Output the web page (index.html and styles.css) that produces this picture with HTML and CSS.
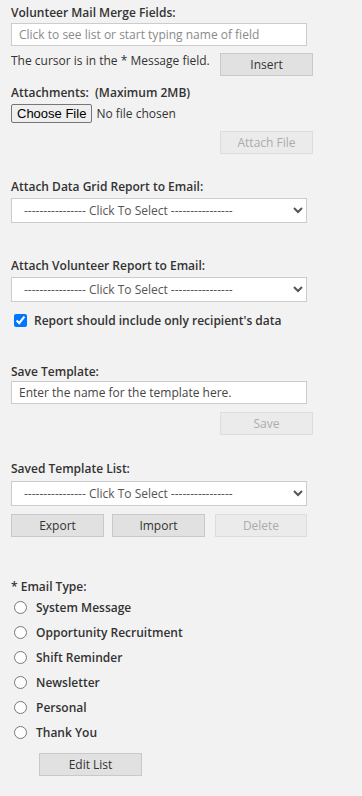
FILE: index.html
```html
<!DOCTYPE html>
<html lang="en">
<head>
    <meta charset="UTF-8">
    <meta name="viewport" content="width=device-width, initial-scale=1.0">
    <title>Compose Email</title>
    <link rel="stylesheet" href="styles.css">
</head>
<body>
    <div class="container">
        <div class="label">Volunteer Mail Merge Fields:</div>
        <input class="text-input merge" type="text" placeholder="Click to see list or start typing name of field">
        <div class="row cursor-row">
            <span class="cursor-note">The cursor is in the * Message field.</span>
            <button class="btn btn-right">Insert</button>
        </div>

        <div class="label attach-label">Attachments: &nbsp;(Maximum 2MB)</div>
        <input class="file-input" type="file">
        <div class="row row-end">
            <button class="btn btn-right" disabled>Attach File</button>
        </div>

        <div class="label grid-label">Attach Data Grid Report to Email:</div>
        <select class="select">
            <option>---------------- Click To Select ----------------</option>
        </select>

        <div class="label volunteer-label">Attach Volunteer Report to Email:</div>
        <select class="select">
            <option>---------------- Click To Select ----------------</option>
        </select>
        <label class="check-row">
            <input type="checkbox" checked>
            <span>Report should include only recipient's data</span>
        </label>

        <div class="label save-label">Save Template:</div>
        <input class="text-input template-name" type="text" value="Enter the name for the template here.">
        <div class="row row-end">
            <button class="btn btn-right" disabled>Save</button>
        </div>

        <div class="label list-label">Saved Template List:</div>
        <select class="select">
            <option>---------------- Click To Select ----------------</option>
        </select>
        <div class="row button-row">
            <button class="btn btn-export">Export</button>
            <button class="btn btn-import">Import</button>
            <button class="btn btn-delete" disabled>Delete</button>
        </div>

        <div class="label type-label">* Email Type:</div>
        <div class="radio-list">
            <label class="radio-row"><input type="radio" name="email_type"><span>System Message</span></label>
            <label class="radio-row"><input type="radio" name="email_type"><span>Opportunity Recruitment</span></label>
            <label class="radio-row"><input type="radio" name="email_type"><span>Shift Reminder</span></label>
            <label class="radio-row"><input type="radio" name="email_type"><span>Newsletter</span></label>
            <label class="radio-row"><input type="radio" name="email_type"><span>Personal</span></label>
            <label class="radio-row"><input type="radio" name="email_type"><span>Thank You</span></label>
        </div>
        <button class="btn btn-edit">Edit List</button>
    </div>
</body>
</html>
```

FILE: styles.css
```css
html, body {
    margin: 0;
    padding: 0;
}
body {
    background-color: #f2f2f2;
    font-family: "Open Sans", "Liberation Sans", sans-serif;
    font-size: 12px;
    color: #333333;
}
.container {
    padding: 5px 0 20px 11px;
}
.label {
    font-weight: 600;
    line-height: 16px;
    color: #333333;
}
.text-input {
    display: block;
    box-sizing: border-box;
    width: 296px;
    height: 23px;
    margin: 2px 0 0 0;
    padding: 0 7px;
    border: 1px solid #cccccc;
    background-color: #ffffff;
    font-family: "Open Sans", sans-serif;
    font-size: 12px;
    color: #444444;
    outline: none;
}
.text-input::placeholder {
    color: #8a8a8a;
}
.template-name {
    margin-top: 1px;
}
.row {
    display: flex;
    align-items: flex-start;
}
.row-end {
    margin-top: 8px;
}
.cursor-row {
    margin-top: 7px;
}
.cursor-note {
    width: 209px;
    line-height: 16px;
}
.btn {
    box-sizing: border-box;
    height: 23px;
    padding: 0;
    border: 1px solid #c9c9c9;
    background-color: #e1e1e1;
    font-family: "Open Sans", sans-serif;
    font-size: 12px;
    color: #333333;
}
.btn:disabled {
    background-color: #ebebeb;
    border-color: #dddddd;
    color: #ababab;
}
.btn-right {
    width: 93px;
    margin-left: 209px;
}
.cursor-row .btn-right {
    margin-left: 0;
}
.attach-label {
    margin-top: 9px;
}
.file-input {
    display: block;
    margin-top: 3px;
    font-family: "Open Sans", sans-serif;
    font-size: 12px;
    color: #333333;
}
.file-input::file-selector-button {
    height: 19px;
    margin-right: 4px;
    padding: 0 5px;
    border: 1px solid #767676;
    border-radius: 2px;
    background-color: #efefef;
    font-family: "Liberation Sans", Arial, sans-serif;
    font-size: 13px;
    color: #000000;
}
.grid-label {
    margin-top: 25px;
}
.volunteer-label {
    margin-top: 35px;
}
.save-label {
    margin-top: 36px;
}
.list-label {
    margin-top: 26px;
}
.type-label {
    margin-top: 42px;
}
.select {
    display: block;
    box-sizing: border-box;
    width: 296px;
    height: 25px;
    margin-top: 3px;
    padding: 0 4px 0 8px;
    border: 1px solid #cccccc;
    border-radius: 0;
    background-color: #ffffff;
    font-family: "Open Sans", sans-serif;
    font-size: 12px;
    color: #555555;
}
.list-label + .select {
    margin-top: 4px;
}
.check-row {
    display: flex;
    align-items: center;
    height: 16px;
    margin-top: 10px;
    padding-left: 3px;
    font-weight: 600;
}
.check-row input {
    width: 13px;
    height: 13px;
    margin: 0 7px 0 0;
}
.button-row {
    margin-top: 8px;
}
.btn-export,
.btn-import {
    width: 93px;
    margin-right: 8px;
}
.btn-import {
    margin-right: 10px;
}
.btn-delete {
    width: 92px;
}
.radio-list {
    margin-top: 0;
}
.radio-row {
    display: flex;
    align-items: center;
    height: 25px;
    padding-left: 3px;
    font-weight: 600;
}
.radio-row input {
    width: 13px;
    height: 13px;
    margin: 0 9px 0 0;
}
.btn-edit {
    display: block;
    width: 103px;
    margin: 8px 0 0 28px;
}
```
